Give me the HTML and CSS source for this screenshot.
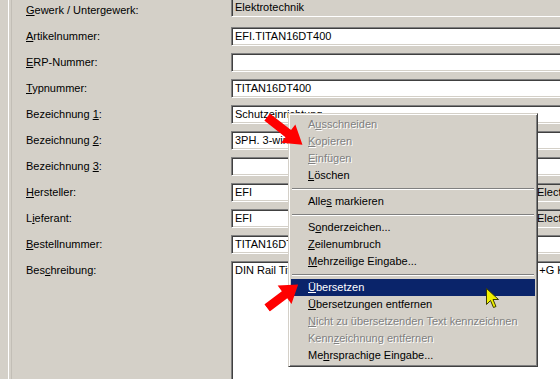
FILE: index.html
```html
<!DOCTYPE html>
<html lang="de">
<head>
    <meta charset="UTF-8">
    <title>Artikel bearbeiten</title>
    <link rel="stylesheet" href="styles.css">
</head>
<body>
<div class="window">
    <div class="panel">
        <div class="panel-inner">
            <form class="article-form">
                <label><u>G</u>ewerk / Untergewerk:</label>
                <div class="field readonly short">Elektrotechnik</div>

                <label><u>A</u>rtikelnummer:</label>
                <div class="field">EFI.TITAN16DT400</div>

                <label><u>E</u>RP-Nummer:</label>
                <div class="field"></div>

                <label><u>T</u>ypnummer:</label>
                <div class="field">TITAN16DT400</div>

                <label>Bezeichnung <u>1</u>:</label>
                <div class="field">Schutzeinrichtung</div>

                <label>Bezeichnung <u>2</u>:</label>
                <div class="field">3PH. 3-wire</div>

                <label>Bezeichnung <u>3</u>:</label>
                <div class="field"></div>

                <label><u>H</u>ersteller:</label>
                <div class="field-pair">
                    <div class="field">EFI</div>
                    <div class="field readonly">Electronics</div>
                </div>

                <label>L<u>i</u>eferant:</label>
                <div class="field-pair">
                    <div class="field">EFI</div>
                    <div class="field readonly">Electronics</div>
                </div>

                <label><u>B</u>estellnummer:</label>
                <div class="field">TITAN16DT400</div>

                <label class="top">Bes<u>c</u>hreibung:</label>
                <div class="field memo">DIN Rail Titan 16 DT 400 Überspannungsschutz, 3PH. 3-wire, +G Klasse II</div>
            </form>
        </div>
    </div>

    <!-- context menu of the memo field -->
    <ul class="context-menu">
        <li class="disabled">A<u>u</u>sschneiden</li>
        <li class="disabled"><u>K</u>opieren</li>
        <li class="disabled"><u>E</u>infügen</li>
        <li><u>L</u>öschen</li>
        <li class="sep"></li>
        <li>Alle<u>s</u> markieren</li>
        <li class="sep"></li>
        <li>S<u>o</u>nderzeichen...</li>
        <li><u>Z</u>eilenumbruch</li>
        <li><u>M</u>ehrzeilige Eingabe...</li>
        <li class="sep"></li>
        <li class="active"><u>Ü</u>bersetzen</li>
        <li><u>Ü</u>bersetzungen entfernen</li>
        <li class="disabled"><u>N</u>icht zu übersetzenden Text kennzeichnen</li>
        <li class="disabled">Kenn<u>z</u>eichnung entfernen</li>
        <li>Me<u>h</u>rsprachige Eingabe...</li>
    </ul>

    <svg class="arrow arrow-one" width="50" height="26" viewBox="0 -13 50 26">
        <polygon points="0,-4.5 27,-4.5 27,-11.5 45,0 27,11.5 27,4.5 0,4.5" fill="#ff0000"/>
    </svg>
    <svg class="arrow arrow-two" width="50" height="26" viewBox="0 -13 50 26">
        <polygon points="0,-4.5 22,-4.5 22,-11.5 39,0 22,11.5 22,4.5 0,4.5" fill="#ff0000"/>
    </svg>

    <svg class="cursor" width="14" height="22" viewBox="0 0 14 22">
        <polygon points="0.5,0.5 0.5,16.5 4.5,12.5 7.5,19.5 10,18.5 7,11.5 12.5,11.5" fill="#f0f000" stroke="#3c3c00" stroke-width="1"/>
    </svg>
</div>
</body>
</html>
```

FILE: styles.css
```css
body {
    margin: 0;
    padding: 0;
    background-color: #d4d0c8;
    font-family: "Liberation Sans", Arial, sans-serif;
    font-size: 11px;
    color: #000;
    overflow: hidden;
}

.window {
    position: relative;
    width: 640px;
    height: 379px;
    overflow: hidden;
}

.panel {
    margin-left: 8px;
    height: 100%;
    border-left: 1px solid #fff;
}

.panel-inner {
    margin-left: 2px;
    height: 100%;
    border-left: 1px solid #c2beb6;
    padding-left: 14px;
}

.article-form {
    display: grid;
    grid-template-columns: 205px 1fr;
    grid-auto-rows: 19px;
    row-gap: 7px;
    margin: 0;
    padding-top: 1px;
}

.article-form label {
    align-self: center;
    line-height: 13px;
    white-space: nowrap;
}

.article-form label.top {
    align-self: start;
    padding-top: 3px;
}

.field {
    box-sizing: border-box;
    height: 19px;
    padding: 0 3px;
    line-height: 17px;
    background-color: #fff;
    border: 1px solid;
    border-color: #808080 #fff #fff #808080;
    box-shadow: inset 1px 1px 0 #404040, inset -1px -1px 0 #d4d0c8;
    white-space: nowrap;
    overflow: hidden;
}

.field.readonly {
    background-color: #d4d0c8;
}

.field.short {
    margin-top: -3px;
}

.field-pair {
    display: flex;
    gap: 6px;
}

.field-pair .field:first-child {
    width: 296px;
    flex: none;
}

.field-pair .field:last-child {
    flex: 1;
}

.field.memo {
    height: 140px;
}

/* popup menu */
.context-menu {
    position: absolute;
    left: 288px;
    top: 113px;
    width: 244px;
    margin: 0;
    padding: 2px;
    list-style: none;
    background-color: #d4d0c8;
    border: 1px solid;
    border-color: #d4d0c8 #404040 #404040 #d4d0c8;
    box-shadow: inset 1px 1px 0 #fff, inset -1px -1px 0 #808080;
}

.context-menu li {
    height: 17px;
    line-height: 17px;
    padding-left: 17px;
    white-space: nowrap;
}

.context-menu li.disabled {
    color: #808080;
    text-shadow: 1px 1px 0 #fff;
}

.context-menu li.active {
    background-color: #0a246a;
    color: #fff;
}

.context-menu li.sep {
    height: 9px;
    padding: 0;
    margin: 0 1px;
    display: flex;
    flex-direction: column;
    justify-content: center;
}

.context-menu li.sep::before {
    content: "";
    display: block;
    border-top: 1px solid #808080;
    border-bottom: 1px solid #fff;
}

.arrow {
    position: absolute;
    transform-origin: 0 13px;
}

.arrow-one {
    left: 267px;
    top: 104px;
    transform: rotate(38deg);
}

.arrow-two {
    left: 267px;
    top: 295px;
    transform: rotate(-37deg);
}

.cursor {
    position: absolute;
    left: 486px;
    top: 288px;
}
```
